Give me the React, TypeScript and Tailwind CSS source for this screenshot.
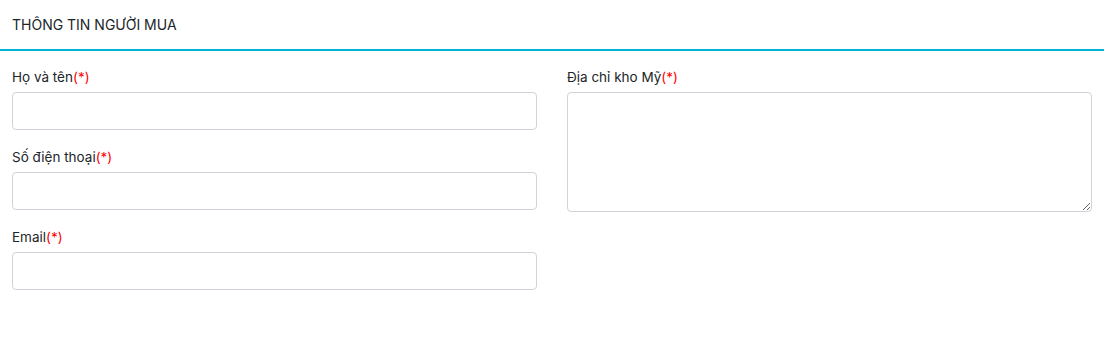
import React from 'react';

const Label: React.FC<{ text: string }> = ({ text }) => (
  <label className="block mb-[5px] text-[13.5px] leading-[19px] text-[#212529]">
    {text}
    <span className="text-[#ff0000]">(*)</span>
  </label>
);

const inputCls = 'w-full h-[38px] px-3 border border-[#ced4da] rounded-[4px] outline-none text-[13px]';

const App: React.FC = () => {
  return (
    <div className="w-[1104px] bg-white font-['Inter',sans-serif] text-[#212529]">
      <div className="h-[49px] px-3 flex items-center">
        <h2 className="text-[14px] font-normal uppercase">Thông tin người mua</h2>
      </div>
      <div className="h-[1.5px] bg-[#00b4d8]" />

      <div className="grid grid-cols-2 gap-x-[30px] px-3 pt-[17px]">
        <div className="flex flex-col gap-[18px]">
          <div>
            <Label text="Họ và tên" />
            <input type="text" className={inputCls} />
          </div>
          <div>
            <Label text="Số điện thoại" />
            <input type="text" className={inputCls} />
          </div>
          <div>
            <Label text="Email" />
            <input type="text" className={inputCls} />
          </div>
        </div>

        <div>
          <Label text="Địa chỉ kho Mỹ" />
          <textarea className="block w-full h-[120px] px-3 py-2 border border-[#ced4da] rounded-[4px] outline-none text-[13px]" />
        </div>
      </div>
    </div>
  );
};

export default App;
